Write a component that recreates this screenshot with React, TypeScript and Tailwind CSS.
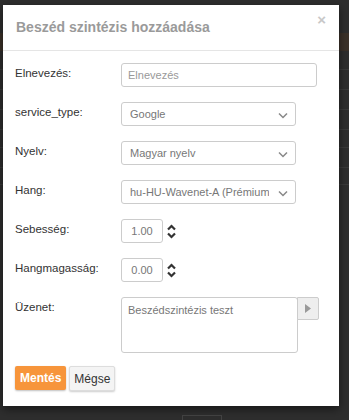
import { useState } from 'react';

const font = { fontFamily: '"Liberation Sans", Arial, sans-serif' };

function Chevron() {
  return (
    <svg width="10" height="7" viewBox="0 0 10 7" className="absolute right-[7px] top-[9px]">
      <path d="M1 1.5 L5 5.5 L9 1.5" fill="none" stroke="#888" strokeWidth="1.5" />
    </svg>
  );
}

function Spinner() {
  return (
    <svg width="9" height="15" viewBox="0 0 9 15" className="ml-[4px] mt-[5px]">
      <path d="M1 5.5 L4.5 2 L8 5.5" fill="none" stroke="#333" strokeWidth="2.2" />
      <path d="M1 9.5 L4.5 13 L8 9.5" fill="none" stroke="#333" strokeWidth="2.2" />
    </svg>
  );
}

function Row({ label, children }: { label: string; children: React.ReactNode }) {
  return (
    <div className="flex items-start">
      <label className="w-[106px] shrink-0 pt-[2px] text-[11.5px] text-[#333]">{label}</label>
      {children}
    </div>
  );
}

function Select({ value }: { value: string }) {
  return (
    <div className="relative h-[24px] w-[175px] rounded-[3px] border border-[#ccc] bg-white pl-[8px] text-[11px] leading-[22px] text-[#777] overflow-hidden whitespace-nowrap">
      <span className="block w-[139px] overflow-hidden">{value}</span>
      <Chevron />
    </div>
  );
}

export default function App() {
  const [name, setName] = useState('');

  return (
    <div className="relative h-[420px] w-[349px] overflow-hidden bg-[#2e2e2e]" style={font}>
      {/* page behind the overlay */}
      <div className="flex flex-col pt-[33px]">
        <div className="h-[18px] bg-[#3b3129]" />
        <div className="h-[19px] border-b border-[#3a3a3a]" />
        <div className="h-[20px] border-b border-[#3a3a3a]" />
        <div className="h-[20px] border-b border-[#3a3a3a]" />
        <div className="h-[20px] border-b border-[#3a3a3a]" />
        <div className="h-[18px] border-b border-[#3a3a3a]" />
        <div className="h-[20px] border-b border-[#3a3a3a]" />
        <div className="h-[17px] border-b border-[#3a3a3a]" />
      </div>
      <div className="absolute left-[182px] top-[415px] h-[10px] w-[40px] border border-[#444]" />

      <div className="absolute left-[3px] top-[5px] w-[336px] bg-white shadow-[0_3px_9px_rgba(0,0,0,0.5)]">
        <div className="relative flex h-[46px] items-center border-b border-[#e5e5e5] pl-[13px]">
          <h4 className="text-[14px] font-bold text-[#9a9a9a]">Beszéd szintézis hozzáadása</h4>
          <span className="absolute right-[13px] top-[7px] text-[15px] font-bold leading-none text-[#c8c8c8]">×</span>
        </div>

        <div className="flex flex-col gap-[15px] px-[12px] pt-[12px]">
          <Row label="Elnevezés:">
            <input
              value={name}
              onChange={(e) => setName(e.target.value)}
              placeholder="Elnevezés"
              className="h-[24px] w-[196px] rounded-[3px] border border-[#ccc] px-[6px] text-[11px] text-[#555] placeholder:text-[#999] outline-none"
            />
          </Row>
          <Row label="service_type:">
            <Select value="Google" />
          </Row>
          <Row label="Nyelv:">
            <Select value="Magyar nyelv" />
          </Row>
          <Row label="Hang:">
            <Select value="hu-HU-Wavenet-A (Prémium)" />
          </Row>
          <Row label="Sebesség:">
            <div className="flex">
              <div className="h-[24px] w-[42px] rounded-[3px] border border-[#ccc] text-center text-[11px] leading-[22px] text-[#777]">1.00</div>
              <Spinner />
            </div>
          </Row>
          <Row label="Hangmagasság:">
            <div className="flex">
              <div className="h-[24px] w-[42px] rounded-[3px] border border-[#ccc] text-center text-[11px] leading-[22px] text-[#777]">0.00</div>
              <Spinner />
            </div>
          </Row>
          <Row label="Üzenet:">
            <div className="flex items-start">
              <div className="h-[56px] w-[177px] rounded-[3px] border border-[#ccc] px-[6px] pt-[4px] text-[11px] text-[#777]">
                Beszédszintézis teszt
              </div>
              <div className="-ml-[1px] flex h-[23px] w-[22px] items-center justify-center rounded-r-[2px] border border-[#ccc] bg-[#eee]">
                <svg width="6" height="9" viewBox="0 0 6 9">
                  <path d="M0 0 L6 4.5 L0 9 Z" fill="#999" />
                </svg>
              </div>
            </div>
          </Row>
        </div>

        <div className="flex gap-[3px] px-[12px] pb-[15px] pt-[13px]">
          <button className="h-[24px] rounded-[2px] bg-[#f7953b] px-[5px] text-[12px] font-bold text-white shadow-[0_1px_2px_rgba(0,0,0,0.25)]">
            Mentés
          </button>
          <button className="h-[25px] rounded-[2px] border border-[#ddd] bg-[#f4f4f4] px-[4px] text-[12px] text-[#333] shadow-[0_1px_2px_rgba(0,0,0,0.2)]">
            Mégse
          </button>
        </div>
      </div>
    </div>
  );
}
